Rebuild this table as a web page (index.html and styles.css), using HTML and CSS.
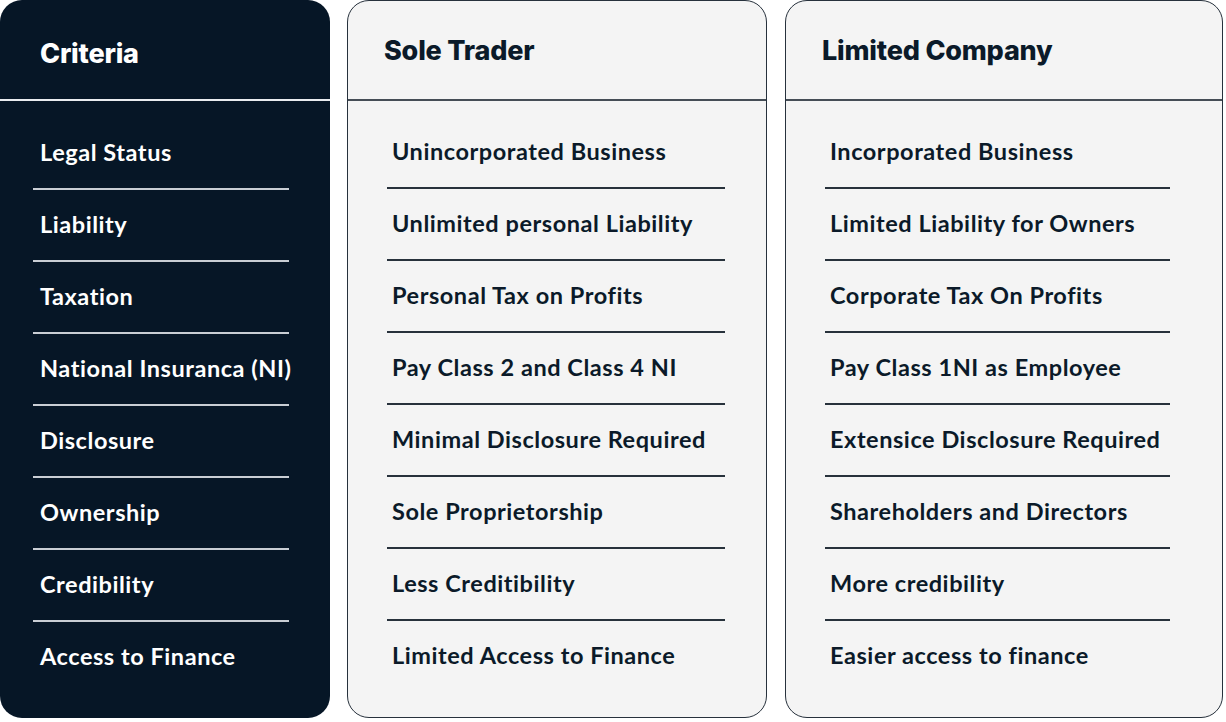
FILE: index.html
```html
<!DOCTYPE html>
<html lang="en">
<head>
<meta charset="utf-8">
<title>Sole Trader vs Limited Company</title>
<link rel="stylesheet" href="styles.css">
</head>
<body>
<main class="table">
  <section class="col col-criteria">
    <header class="col-head"><h2>Criteria</h2></header>
    <ul class="rows">
      <li class="row">Legal Status</li>
      <li class="row">Liability</li>
      <li class="row">Taxation</li>
      <li class="row">National Insuranca (NI)</li>
      <li class="row">Disclosure</li>
      <li class="row">Ownership</li>
      <li class="row">Credibility</li>
      <li class="row">Access to Finance</li>
    </ul>
  </section>
  <section class="col col-card col-sole">
    <header class="col-head"><h2>Sole Trader</h2></header>
    <ul class="rows">
      <li class="row">Unincorporated Business</li>
      <li class="row">Unlimited personal Liability</li>
      <li class="row">Personal Tax on Profits</li>
      <li class="row">Pay Class 2 and Class 4 NI</li>
      <li class="row">Minimal Disclosure Required</li>
      <li class="row">Sole Proprietorship</li>
      <li class="row">Less Creditibility</li>
      <li class="row">Limited Access to Finance</li>
    </ul>
  </section>
  <section class="col col-card col-ltd">
    <header class="col-head"><h2>Limited Company</h2></header>
    <ul class="rows">
      <li class="row">Incorporated Business</li>
      <li class="row">Limited Liability for Owners</li>
      <li class="row">Corporate Tax On Profits</li>
      <li class="row">Pay Class 1NI as Employee</li>
      <li class="row">Extensice Disclosure Required</li>
      <li class="row">Shareholders and Directors</li>
      <li class="row">More credibility</li>
      <li class="row">Easier access to finance</li>
    </ul>
  </section>
</main>
</body>
</html>
```

FILE: styles.css
```css
* { box-sizing: border-box; }
html, body { margin: 0; padding: 0; }
body {
  background: #ffffff;
  width: 1226px;
  height: 722px;
  overflow: hidden;
  font-family: "Lato", "Nunito Sans", "Noto Sans", sans-serif;
}
.table {
  display: grid;
  grid-template-columns: 330px 420px 439px;
  column-gap: 17px;
  height: 718px;
}
.col-ltd { margin-left: 1px; }
.col {
  display: flex;
  flex-direction: column;
  border-radius: 22px;
  overflow: hidden;
}
.col-criteria {
  background: #061626;
  color: #ffffff;
}
.col-card {
  background: #f4f4f4;
  color: #0b1a29;
  border: 1.5px solid #27313c;
}
.col-head {
  height: 101px;
  flex: none;
  display: flex;
  align-items: center;
  border-bottom: 2px solid #e9ecef;
}
.col-card .col-head {
  border-bottom-color: #454d56;
  height: 99.5px;
  padding-top: 2px;
}
.col-head h2 {
  margin: 0;
  font-family: "Inter", "Liberation Sans", sans-serif;
  font-weight: 800;
  font-size: 27px;
  letter-spacing: -0.2px;
  line-height: 1;
}
.col-criteria .col-head { padding-left: 40px; padding-top: 8px; }
.col-card .col-head { padding-left: 36px; }
.rows {
  list-style: none;
  margin: 0;
  padding: 17px 0 0;
}
.col-card .rows { padding-top: 16px; }
.row {
  font-weight: 700;
  font-size: 23.5px;
  line-height: 30px;
  padding: 19px 0 23px;
  position: relative;
  letter-spacing: 0.55px;
}
.row::after {
  content: "";
  display: block;
  position: absolute;
  bottom: 0;
  height: 2px;
}
.row:last-child::after { display: none; }
.col-criteria .row { padding-left: 40px; }
.col-criteria .row::after { left: 33px; width: 256px; background: #c9ced4; }
.col-card .row { padding-left: 44px; }
.col-card .row::after { left: 39px; background: #27313b; }
.col-sole .row::after { width: 338px; }
.col-ltd .row::after { width: 345px; }
```
